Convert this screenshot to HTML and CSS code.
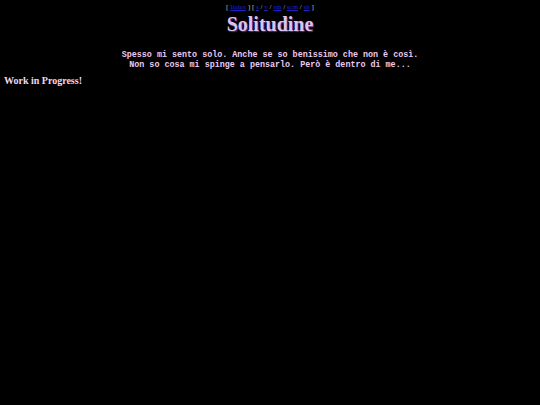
FILE: index.html
```html
<!DOCTYPE html>
<html>
<head>
<meta charset="utf-8">
<link rel="stylesheet" href="styles.css">
</head>
<body>
<div class="nav">[ <a href="#">Index</a> ] [ <a href="#">s</a> / <a href="#">v</a> / <a href="#">sm</a> / <a href="#">scm</a> / <a href="#">sh</a> ]</div>
<h1 class="title">Solitudine</h1>
<p class="poem">Spesso mi sento solo. Anche se so benissimo che non è così.<br>Non so cosa mi spinge a pensarlo. Però è dentro di me...</p>
<h3 class="wip">Work in Progress!</h3>
</body>
</html>
```
FILE: styles.css
```css
html, body {
  background: #000;
}
body {
  margin: 0;
  padding: 3px 4px;
  font-family: "Liberation Serif", serif;
  color: #e8d0e8;
}
.nav {
  text-align: center;
  font-size: 7px;
  line-height: 8px;
  color: #c8c8c8;
}
.nav a {
  color: #2020c0;
}
.title {
  margin: 1px 0 0;
  text-align: center;
  font-size: 20px;
  line-height: 24px;
  font-weight: bold;
  color: #dcc4ec;
  text-shadow: 1px 1px 1px #6a2a8a;
}
.poem {
  margin: 15px 0 0;
  text-align: center;
  font-family: "Liberation Mono", monospace;
  font-size: 8.4px;
  line-height: 9.5px;
  font-weight: bold;
  color: #ecc8f0;
}
.wip {
  margin: 4px 0 0;
  font-size: 10px;
  line-height: 13px;
  font-weight: bold;
  color: #f0d8f0;
}
```
